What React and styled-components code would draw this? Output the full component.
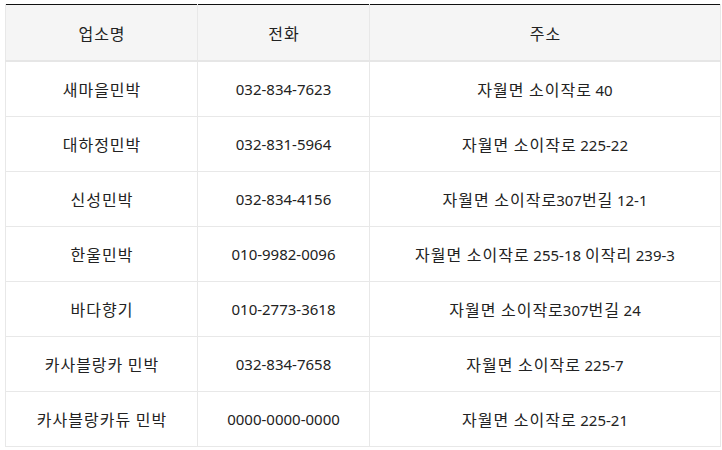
import React from 'react';
import styled, { createGlobalStyle } from 'styled-components';

const GlobalStyle = createGlobalStyle`
  html, body {
    margin: 0;
    padding: 0;
    background: #fff;
  }
  body {
    font-family: "Noto Sans", "Noto Sans CJK KR", sans-serif;
  }
`;

const Wrapper = styled.div`
  padding: 4px 5px 0 5px;
`;

const Table = styled.table`
  width: 712px;
  border-collapse: collapse;
  table-layout: fixed;
  border-top: 1px solid #111;
  font-size: 15px;
  color: #222;
`;

const HeadCell = styled.th`
  height: 55px;
  padding: 0;
  background: #f5f5f5;
  font-weight: 400;
  text-align: center;
  border-left: 1px solid #e8e8e8;
  border-right: 1px solid #e8e8e8;
  border-bottom: 2px solid #e6e6e6;
  width: ${p => p.$w}px;
`;

const Cell = styled.td`
  height: 54px;
  padding: 0;
  text-align: center;
  white-space: nowrap;
  border: 1px solid #e8e8e8;
`;

// hangul in the original font runs wider than Noto CJK
const Hangul = styled.span`
  font-family: "Noto Sans CJK KR", sans-serif;
  font-size: 16px;
  letter-spacing: 1px;
  margin-right: -1px;
`;

const Text = ({ children }) => (
  <>
    {children.split(/([\uAC00-\uD7A3][\uAC00-\uD7A3 ]*)/).map((part, i) =>
      i % 2 ? <Hangul key={i}>{part}</Hangul> : part
    )}
  </>
);

const rows = [
  ['새마을민박', '032-834-7623', '자월면 소이작로 40'],
  ['대하정민박', '032-831-5964', '자월면 소이작로 225-22'],
  ['신성민박', '032-834-4156', '자월면 소이작로307번길 12-1'],
  ['한울민박', '010-9982-0096', '자월면 소이작로 255-18 이작리 239-3'],
  ['바다향기', '010-2773-3618', '자월면 소이작로307번길 24'],
  ['카사블랑카 민박', '032-834-7658', '자월면 소이작로 225-7'],
  ['카사블랑카듀 민박', '0000-0000-0000', '자월면 소이작로 225-21'],
];

export default function App() {
  return (
    <Wrapper>
      <GlobalStyle />
      <Table>
        <thead>
          <tr>
            <HeadCell $w={191}><Text>업소명</Text></HeadCell>
            <HeadCell $w={171}><Text>전화</Text></HeadCell>
            <HeadCell $w={350}><Text>주소</Text></HeadCell>
          </tr>
        </thead>
        <tbody>
          {rows.map(r => (
            <tr key={r[0]}>
              <Cell><Text>{r[0]}</Text></Cell>
              <Cell>{r[1]}</Cell>
              <Cell><Text>{r[2]}</Text></Cell>
            </tr>
          ))}
        </tbody>
      </Table>
    </Wrapper>
  );
}
